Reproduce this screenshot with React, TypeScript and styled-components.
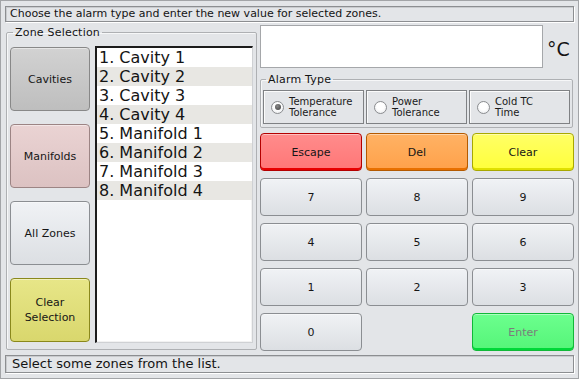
import React from "react";
import styled, { createGlobalStyle, css } from "styled-components";

const GlobalStyle = createGlobalStyle`
  html, body {
    margin: 0;
    padding: 0;
    background: #e3e5e8;
  }
  * {
    box-sizing: border-box;
  }
`;

const font = `"DejaVu Sans", "Noto Sans", sans-serif`;

const Window = styled.div`
  width: 579px;
  height: 379px;
  border: 1px solid #a2a4a7;
  padding: 5px 4px 5px 4px;
  background: #e3e5e8;
  display: flex;
  flex-direction: column;
  font-family: ${font};
  color: #141414;
`;

const sunken = css`
  border: 1px solid #8c8e91;
  box-shadow: inset 1px 1px 0 #c9cbce, 1px 1px 0 #ffffff;
`;

const InfoBar = styled.div`
  ${sunken};
  height: 16px;
  padding: 0 4px;
  font-size: 11px;
  line-height: 14px;
  white-space: nowrap;
  overflow: hidden;
`;

const StatusBar = styled.div`
  ${sunken};
  height: 18px;
  margin-top: 5px;
  padding: 0 6px;
  font-size: 13px;
  line-height: 16px;
  white-space: nowrap;
`;

const Main = styled.div`
  display: flex;
  gap: 3px;
  margin-top: 3px;
  height: 325px;
`;

const GroupBox = styled.fieldset<{ $w: number; $h: number }>`
  margin: 0;
  width: ${(p) => p.$w}px;
  height: ${(p) => p.$h}px;
  min-width: 0;
  border: 1px solid #aeb0b3;
  border-radius: 2px;
  box-shadow: inset 1px 1px 0 #f6f7f8;
  flex: none;
`;

const ZoneGroup = styled(GroupBox)`
  margin: 1px 0 0 1px;
  padding: 7px 3px 6px 3px;
`;

const AlarmGroup = styled(GroupBox)`
  margin-top: 5px;
  padding: 4px 3px 3px 2px;
`;

const Legend = styled.legend`
  margin-left: 3px;
  padding: 0 2px;
  font-size: 11px;
  line-height: 13px;
  letter-spacing: 0.2px;
`;

const ZoneBody = styled.div`
  display: flex;
  gap: 5px;
  height: 100%;
`;

const SideButtons = styled.div`
  width: 80px;
  flex: none;
  display: flex;
  flex-direction: column;
  justify-content: space-between;
  padding: 1px 0;
`;

type Tone =
  | "plain"
  | "gray"
  | "pink"
  | "olive"
  | "red"
  | "orange"
  | "yellow"
  | "green";

const tones: Record<Tone, { top: string; bottom: string; border: string; edge?: string; text?: string }> = {
  plain: { top: "#f0f2f5", bottom: "#dcdfe3", border: "#8b8e92" },
  gray: { top: "#d2d2d2", bottom: "#bebebe", border: "#888888" },
  pink: { top: "#ead3d3", bottom: "#dcc2c2", border: "#9c8484" },
  olive: { top: "#e7e688", bottom: "#d9d76d", border: "#8a881c" },
  red: { top: "#ff8c8c", bottom: "#ff7676", border: "#b40000", edge: "#e80000" },
  orange: { top: "#ffb264", bottom: "#ffa14a", border: "#b45a00", edge: "#e87000" },
  yellow: { top: "#ffff66", bottom: "#ffff3a", border: "#a8a800", edge: "#e0e000" },
  green: { top: "#6cff8e", bottom: "#55f578", border: "#10b838", edge: "#00d838", text: "#7c7c7c" },
};

const Button = styled.button<{ $tone: Tone }>`
  margin: 0;
  padding: 0;
  font-family: ${font};
  font-size: 11px;
  line-height: 15px;
  color: ${(p) => tones[p.$tone].text ?? "#161616"};
  border-radius: 4px;
  border: 1px solid ${(p) => tones[p.$tone].border};
  background: linear-gradient(
    to bottom,
    ${(p) => tones[p.$tone].top},
    ${(p) => tones[p.$tone].bottom}
  );
  box-shadow: inset 0 1px 0 rgba(255, 255, 255, 0.45)
    ${(p) => (tones[p.$tone].edge ? `, inset 0 -2px 0 ${tones[p.$tone].edge}` : "")};
`;

const SideButton = styled(Button)`
  height: 64px;
`;

const ZoneList = styled.ul`
  flex: 1;
  margin: 0;
  padding: 0;
  list-style: none;
  background: #ffffff;
  border-style: solid;
  border-width: 2px 1px 1px 2px;
  border-color: #1c1c1c #cfd1d4 #cfd1d4 #1c1c1c;
  box-shadow: inset -1px -1px 0 #f2f2f2;
`;

const ZoneItem = styled.li<{ $alt: boolean }>`
  height: 19px;
  padding-left: 2px;
  font-size: 16px;
  line-height: 19px;
  white-space: nowrap;
  background: ${(p) => (p.$alt ? "#e8e7e3" : "#ffffff")};
`;

const RightColumn = styled.div`
  width: 314px;
  flex: none;
  display: flex;
  flex-direction: column;
`;

const ValueRow = styled.div`
  display: flex;
  align-items: center;
  height: 43px;
  flex: none;
`;

const ValueBox = styled.div`
  width: 283px;
  height: 43px;
  background: #ffffff;
  border: 1px solid #a5a7aa;
`;

const Unit = styled.span`
  margin-left: 4px;
  font-size: 19px;
  line-height: 22px;
  padding-top: 4px;
`;

const RadioRow = styled.div`
  display: grid;
  grid-template-columns: repeat(3, 101px);
  gap: 2px;
`;

const RadioOption = styled.label`
  height: 34px;
  display: flex;
  align-items: center;
  gap: 5px;
  padding-left: 7px;
  border: 1px solid #7f8184;
  box-shadow: inset 1px 1px 0 #fbfbfb;
  font-size: 10px;
  line-height: 11px;
  color: #1a1a1a;
`;

const RadioDot = styled.span<{ $on: boolean }>`
  width: 13px;
  height: 13px;
  flex: none;
  border-radius: 50%;
  border: 1px solid #8a8c8f;
  background: radial-gradient(circle at 50% 40%, #ffffff 40%, #e4e6e9 100%);
  display: flex;
  align-items: center;
  justify-content: center;
  &::after {
    content: "";
    display: ${(p) => (p.$on ? "block" : "none")};
    width: 6px;
    height: 6px;
    border-radius: 50%;
    background: radial-gradient(circle at 40% 35%, #8a8a8a, #3c3c3c);
  }
`;

const Keypad = styled.div`
  margin-top: 5px;
  display: grid;
  grid-template-columns: repeat(3, 1fr);
  grid-auto-rows: 38px;
  column-gap: 4px;
  row-gap: 7px;
`;

const Spacer = styled.div``;

const zones = [
  "1. Cavity 1",
  "2. Cavity 2",
  "3. Cavity 3",
  "4. Cavity 4",
  "5. Manifold 1",
  "6. Manifold 2",
  "7. Manifold 3",
  "8. Manifold 4",
];

const alarmTypes = [
  { lines: ["Temperature", "Tolerance"], on: true },
  { lines: ["Power", "Tolerance"], on: false },
  { lines: ["Cold TC", "Time"], on: false },
];

const keys: Array<{ label: string; tone: Tone } | null> = [
  { label: "Escape", tone: "red" },
  { label: "Del", tone: "orange" },
  { label: "Clear", tone: "yellow" },
  { label: "7", tone: "plain" },
  { label: "8", tone: "plain" },
  { label: "9", tone: "plain" },
  { label: "4", tone: "plain" },
  { label: "5", tone: "plain" },
  { label: "6", tone: "plain" },
  { label: "1", tone: "plain" },
  { label: "2", tone: "plain" },
  { label: "3", tone: "plain" },
  { label: "0", tone: "plain" },
  null,
  { label: "Enter", tone: "green" },
];

export default function App() {
  return (
    <>
      <GlobalStyle />
      <Window>
        <InfoBar>Choose the alarm type and enter the new value for selected zones.</InfoBar>
        <Main>
          <ZoneGroup $w={251} $h={324}>
            <Legend>Zone Selection</Legend>
            <ZoneBody>
              <SideButtons>
                <SideButton $tone="gray">Cavities</SideButton>
                <SideButton $tone="pink">Manifolds</SideButton>
                <SideButton $tone="plain">All Zones</SideButton>
                <SideButton $tone="olive">
                  Clear
                  <br />
                  Selection
                </SideButton>
              </SideButtons>
              <ZoneList>
                {zones.map((z, i) => (
                  <ZoneItem key={z} $alt={i % 2 === 1}>
                    {z}
                  </ZoneItem>
                ))}
              </ZoneList>
            </ZoneBody>
          </ZoneGroup>
          <RightColumn>
            <ValueRow>
              <ValueBox />
              <Unit>°C</Unit>
            </ValueRow>
            <AlarmGroup $w={313} $h={55}>
              <Legend>Alarm Type</Legend>
              <RadioRow>
                {alarmTypes.map((a) => (
                  <RadioOption key={a.lines[0]}>
                    <RadioDot $on={a.on} />
                    <span>
                      {a.lines[0]}
                      <br />
                      {a.lines[1]}
                    </span>
                  </RadioOption>
                ))}
              </RadioRow>
            </AlarmGroup>
            <Keypad>
              {keys.map((k, i) =>
                k ? (
                  <Button key={k.label} $tone={k.tone}>
                    {k.label}
                  </Button>
                ) : (
                  <Spacer key={`gap-${i}`} />
                )
              )}
            </Keypad>
          </RightColumn>
        </Main>
        <StatusBar>Select some zones from the list.</StatusBar>
      </Window>
    </>
  );
}
